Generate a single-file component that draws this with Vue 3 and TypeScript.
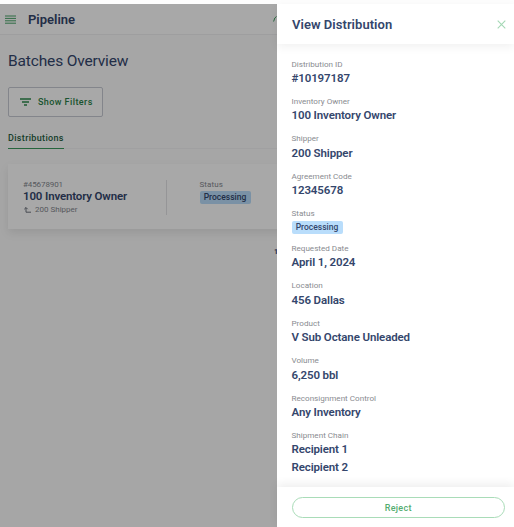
<script setup lang="ts">
interface Field {
  label: string
  values: string[]
  badge?: boolean
}

const fields: Field[] = [
  { label: 'Distribution ID', values: ['#10197187'] },
  { label: 'Inventory Owner', values: ['100 Inventory Owner'] },
  { label: 'Shipper', values: ['200 Shipper'] },
  { label: 'Agreement Code', values: ['12345678'] },
  { label: 'Status', values: ['Processing'], badge: true },
  { label: 'Requested Date', values: ['April 1, 2024'] },
  { label: 'Location', values: ['456 Dallas'] },
  { label: 'Product', values: ['V Sub Octane Unleaded'] },
  { label: 'Volume', values: ['6,250 bbl'] },
  { label: 'Reconsignment Control', values: ['Any Inventory'] },
  { label: 'Shipment Chain', values: ['Recipient 1', 'Recipient 2'] },
]
</script>

<template>
  <div class="screen">
    <div class="page">
      <header class="topbar">
        <svg class="menu" width="11" height="9" viewBox="0 0 11 9">
          <path d="M0 1h11M0 3.400h11M0 5.800h11M0 8.200h11" stroke="#48a468" stroke-width="1" />
        </svg>
        <span class="brand">Pipeline</span>
        <svg class="user" width="5" height="6" viewBox="0 0 5 6">
          <path d="M.6 5.500 1.800 2 3.500.5" stroke="#3f9f62" stroke-width="1" fill="none" />
        </svg>
      </header>
      <main class="content">
        <h1>Batches Overview</h1>
        <button class="filters">
          <svg width="11" height="8" viewBox="0 0 11 8">
            <path d="M0 1h11M2 4h7M4 7h3" stroke="#2c8a4c" stroke-width="1.500" />
          </svg>
          <span>Show Filters</span>
        </button>
        <nav class="tabs"><span class="tab">Distributions</span></nav>
        <article class="card">
          <div class="owner">
            <div class="batch">#45678901</div>
            <div class="name">100 Inventory Owner</div>
            <div class="shipper">
              <svg width="7" height="6" viewBox="0 0 7 6">
                <path d="M.3 2.200 2 .5l1.700 1.700M2 .7v4.500h5" stroke="#5f6470" stroke-width=".9" fill="none" />
              </svg>
              <span>200 Shipper</span>
            </div>
          </div>
          <div class="state">
            <div class="state-label">Status</div>
            <span class="badge">Processing</span>
          </div>
        </article>
        <div class="pager">1</div>
      </main>
      <div class="overlay"></div>
    </div>

    <aside class="drawer">
      <header class="drawer-head">
        <h2>View Distribution</h2>
        <svg width="9" height="9" viewBox="0 0 9 9">
          <path d="M.7.7l7.600 7.600M8.300.7.7 8.300" stroke="#a4d8b5" stroke-width="1.100" />
        </svg>
      </header>
      <dl class="fields">
        <div v-for="field in fields" :key="field.label" class="field" :class="{ status: field.badge }">
          <dt>{{ field.label }}</dt>
          <dd v-for="value in field.values" :key="value">
            <span :class="{ badge: field.badge }">{{ value }}</span>
          </dd>
        </div>
      </dl>
      <footer class="drawer-foot">
        <button class="reject">Reject</button>
      </footer>
    </aside>
  </div>
</template>

<style>
body {
  margin: 0;
  background: #fff;
}
</style>

<style scoped>
* {
  box-sizing: border-box;
}
.screen {
  position: relative;
  width: 514px;
  height: 527px;
  padding-top: 4px;
  overflow: hidden;
  background: #fdfdfd;
  color: #34466c;
  font-family: Roboto, 'Liberation Sans', sans-serif;
}
.page {
  position: relative;
  height: 523px;
  background: #fcfcfc;
}
.overlay {
  position: absolute;
  inset: 0;
  background: rgba(0, 0, 0, 0.34);
}
.topbar {
  display: flex;
  align-items: center;
  height: 31px;
  padding-left: 5px;
  border-bottom: 1px solid #f0f0f1;
  background: #fff;
}
.brand {
  width: 245px;
  margin-left: 12px;
  font-size: 13px;
  font-weight: 600;
}
.content {
  padding-left: 8px;
}
h1 {
  margin: 0;
  padding-top: 17px;
  font-size: 15.5px;
  font-weight: 400;
  line-height: 18px;
  letter-spacing: -0.15px;
}
.filters {
  display: flex;
  align-items: center;
  gap: 7px;
  width: 95px;
  height: 30px;
  margin-top: 17px;
  padding: 0 0 0 11px;
  border: 1px solid #c7cad3;
  border-radius: 2px;
  background: #fff;
  color: #2c7f49;
  font: 500 9px Roboto, sans-serif;
  letter-spacing: 0.42px;
}
.tabs {
  display: flex;
  height: 19px;
  margin-top: 13px;
  border-bottom: 1px solid #f3f3f4;
}
.tab {
  height: 19px;
  border-bottom: 1px solid #3b9a5d;
  color: #265e42;
  font-size: 9px;
  font-weight: 500;
  line-height: 17px;
  letter-spacing: 0.34px;
}
.card {
  display: flex;
  height: 65px;
  margin-top: 15px;
  padding: 16px 0 0 15px;
  background: #fff;
  box-shadow: 0 4px 9px rgba(0, 0, 0, 0.09);
}
.owner {
  width: 144px;
  height: 35px;
  border-right: 1px solid #e2e2e5;
}
.batch,
.shipper,
.state-label {
  color: #85888f;
  font-size: 8px;
  line-height: 9px;
}
.state-label {
  letter-spacing: 0.1px;
}
.batch {
  letter-spacing: -0.1px;
}
.name {
  font-size: 11.5px;
  font-weight: 600;
  line-height: 15px;
  letter-spacing: -0.15px;
}
.shipper {
  display: flex;
  align-items: center;
  gap: 4px;
  padding-left: 1px;
  line-height: 11px;
}
.state {
  padding-left: 32.5px;
}
.badge {
  display: block;
  width: 51px;
  height: 13px;
  border-radius: 2px;
  background: #b9ddfb;
  color: #34466c;
  font-size: 8.5px;
  font-weight: 500;
  line-height: 13px;
  text-align: center;
}
.state .badge {
  margin-top: 2px;
}
.pager {
  margin: 17px 0 0 266px;
  font-size: 7px;
  font-weight: 700;
  line-height: 12px;
}
.drawer {
  position: absolute;
  inset: 4px 0 0 277px;
  display: flex;
  flex-direction: column;
  background: #fff;
}
.drawer-head {
  z-index: 1;
  display: flex;
  flex: none;
  align-items: center;
  justify-content: space-between;
  height: 40px;
  padding: 0 8px 0 15px;
  box-shadow: 0 3px 9px rgba(0, 0, 0, 0.06);
}
h2 {
  margin: 0;
  font-size: 13px;
  font-weight: 600;
  letter-spacing: 0.04px;
}
.fields {
  flex: 1;
  margin: 0;
  padding: 13.6px 0 0 14.5px;
}
.field {
  height: 37.4px;
}
.field.status {
  height: 34.9px;
}
dt {
  color: #898b90;
  font-size: 8.1px;
  line-height: 12.4px;
}
dd {
  margin: 0;
  font-size: 11.5px;
  font-weight: 600;
  line-height: 17.5px;
  letter-spacing: -0.12px;
}
.status dd {
  padding-top: 1px;
  letter-spacing: 0;
}
.drawer-foot {
  z-index: 1;
  flex: none;
  height: 40px;
  padding: 10px 9px 0 14.5px;
  background: #fff;
  box-shadow: 0 -3px 9px rgba(0, 0, 0, 0.07);
}
.reject {
  display: block;
  width: 100%;
  height: 21px;
  padding: 0;
  border: 1px solid #a9dcb8;
  border-radius: 11px;
  background: #fff;
  color: #54ad70;
  font: 500 9px Roboto, sans-serif;
  letter-spacing: 0.3px;
}
</style>
